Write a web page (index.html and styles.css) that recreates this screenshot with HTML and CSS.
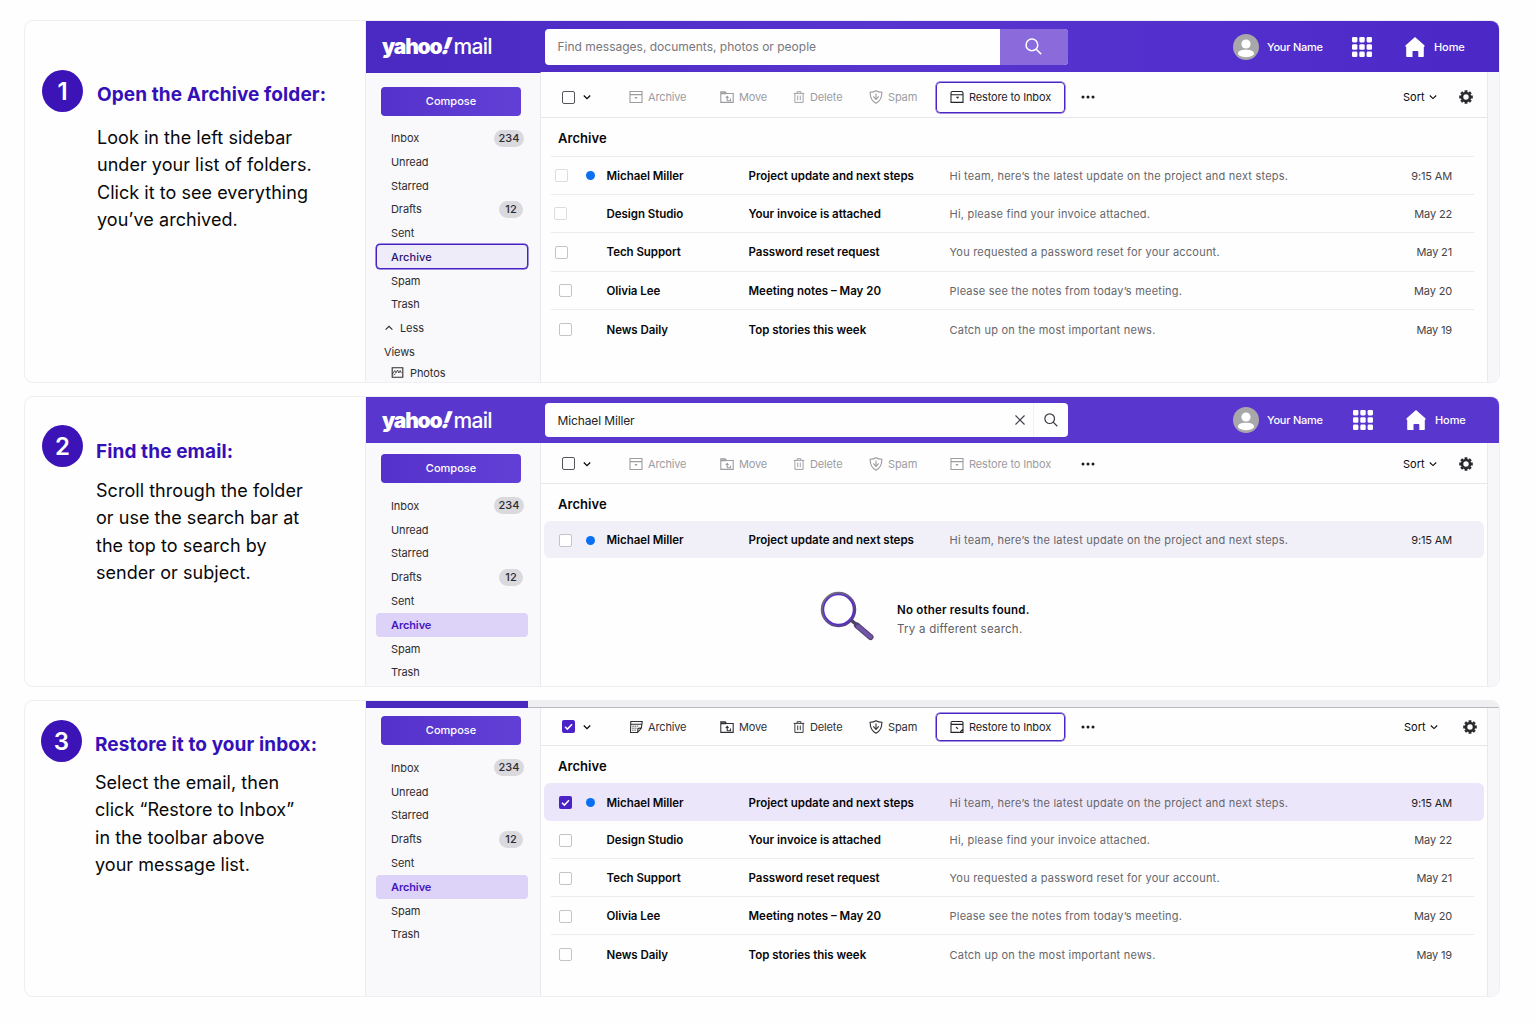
FILE: index.html
```html
<!DOCTYPE html>
<html lang="en">
<head>
    <meta charset="UTF-8">
    <meta name="viewport" content="width=device-width, initial-scale=1.0">
    <title>Restore archived email</title>
    <link rel="stylesheet" href="styles.css">
</head>
<body>
    <!-- Icon set -->
    <svg class="sprite" xmlns="http://www.w3.org/2000/svg">
        <symbol id="i-archive" viewBox="0 0 14 14"><path d="M1 1.500h12v11H1zM1 4.600h12" /><path d="M5.800 7.800h2.400" stroke-width="1.500" /></symbol>
        <symbol id="i-move" viewBox="0 0 14 14"><path d="M.8 12.400V1.800h4.400l1.200 1.700h6.800v8.900z" /><path d="M1 3.200h5.200" stroke-width="2" /><path d="M7.200 10.800V7M5.800 8L7.200 6.400 8.600 8M7.200 10.700h3.300V8.500" /></symbol>
        <symbol id="i-trash" viewBox="0 0 14 14"><path d="M.8 2.800h12.400M4.800 2.600V.8h4.400v1.800M2.200 2.800v10.500h9.600V2.800M5.500 5.300v5.400M8.500 5.300v5.400" /></symbol>
        <symbol id="i-shield" viewBox="0 0 14 14"><path d="M7 .8c1.900 1.200 3.700 1.500 5.900 1.500 0 5-1.200 8.600-5.900 11C2.300 10.900 1.100 7.300 1.100 2.300 3.300 2.300 5.100 2 7 .8z" /><path d="M7 3.600v5.900M4.300 6.300L7 9.500l2.700-3.200" /></symbol>
        <symbol id="i-restore" viewBox="0 0 14 14"><path d="M1 3c0-1 .6-1.500 1.500-1.500h9c.9 0 1.500.5 1.500 1.500v9.400H1zM1 4.700h12M6.200 7.200h2l-.8 1.200" /></symbol>
        <symbol id="i-restore-alt" viewBox="0 0 14 14"><path d="M13 9V2.800c0-.8-.5-1.300-1.300-1.300H2.300C1.500 1.500 1 2 1 2.800v9.600h8M1 4.400h12M6 7.200l2 1.500M10 12.200l3-3v3.200z" /></symbol>
        <symbol id="i-archive-alt" viewBox="0 0 14 14"><path d="M1.500 12.500l.3-11h11.400l-.8 6.500-3.800 4.500zM1.600 4.300h11.200M8.600 12.300l.4-3.800 3.400-.6" /><path d="M3.300 6.200h6M3.200 8.200h5M3.200 10.200h4" stroke-dasharray="1.500 .7" stroke-width=".8" /></symbol>
        <symbol id="i-down" viewBox="0 0 8 8"><path d="M.8 2.500L4 5.600l3.200-3.100" /></symbol>
        <symbol id="i-up" viewBox="0 0 8 8"><path d="M.6 5.700L4 2.300l3.400 3.400" /></symbol>
        <symbol id="i-search" viewBox="0 0 16 16"><circle cx="6.500" cy="6.500" r="5.500" /><path d="M10.500 10.500l4.700 4.700" /></symbol>
        <symbol id="i-close" viewBox="0 0 10 10"><path d="M.5.5l9 9M9.500.5l-9 9" /></symbol>
        <symbol id="i-check" viewBox="0 0 13 13"><path d="M3 6.700l2.400 2.400L10 4.200" /></symbol>
        <symbol id="i-photo" viewBox="0 0 12 11"><path d="M.7.700h10.600v9.600H.7z" /><path d="M1 7l2.300-3.500L4.500 6l1.600-3 1.300 3 1.300-2.500L9.800 6M2 8l2-1.200" stroke-width=".8" /></symbol>
        <symbol id="i-avatar" viewBox="0 0 26 26"><circle cx="13" cy="13" r="13" fill="#a8a8aa" /><circle cx="13" cy="10" r="4.600" fill="#fff" /><path d="M4.900 20.200c0-3.400 3.200-4.500 8.100-4.500s8.100 1.100 8.100 4.500c-2.200 2.200-5 3-8.100 3s-5.900-.8-8.100-3z" fill="#fff" /></symbol>
        <symbol id="i-apps" viewBox="0 0 20 20"><g fill="#fff"><rect width="5.400" height="5.400" rx="1.300" /><rect x="7.300" width="5.400" height="5.400" rx="1.300" /><rect x="14.600" width="5.400" height="5.400" rx="1.300" /><rect y="7.300" width="5.400" height="5.400" rx="1.300" /><rect x="7.300" y="7.300" width="5.400" height="5.400" rx="1.300" /><rect x="14.600" y="7.300" width="5.400" height="5.400" rx="1.300" /><rect y="14.600" width="5.400" height="5.400" rx="1.300" /><rect x="7.300" y="14.600" width="5.400" height="5.400" rx="1.300" /><rect x="14.600" y="14.600" width="5.400" height="5.400" rx="1.300" /></g></symbol>
        <symbol id="i-home" viewBox="0 0 20 20"><path d="M10 0l9.300 8.300c.5.500.4 1.500-.5 1.700V19c0 .600-.4 1-1 1h-4.500v-5.200c0-.500-.3-.8-.8-.8H8.300c-.5 0-.8.3-.8.800V20H2.200c-.6 0-1-.4-1-1v-9C.3 9.800.2 8.800.7 8.300z" fill="#fff" /></symbol>
        <symbol id="i-gear" viewBox="0 0 14 14"><circle cx="7" cy="7" r="4" fill="none" stroke="#29292e" stroke-width="2.600" /><path d="M7 .2v2M7 11.800v2M.2 7h2M11.800 7h2M2.200 2.200l1.400 1.400M10.400 10.400l1.400 1.400M2.200 11.800l1.400-1.400M10.400 3.600l1.400-1.400" stroke="#29292e" stroke-width="2.800" /></symbol>
        <symbol id="i-dots" viewBox="0 0 14 4"><g fill="#1c1c20"><circle cx="2" cy="2" r="1.500" /><circle cx="7" cy="2" r="1.500" /><circle cx="12" cy="2" r="1.500" /></g></symbol>
        <linearGradient id="ring" x1="0" y1="0" x2="1" y2="1">
            <stop offset="0" stop-color="#77737f" />
            <stop offset="1" stop-color="#4d3590" />
        </linearGradient>
    </svg>

    <main class="guide">
        <!-- Step 1 -->
        <section class="panel panel-1">
            <div class="step">
                <div class="num">1</div>
                <div class="step-text">
                    <h2>Open the Archive folder:</h2>
                    <p>Look in the left sidebar<br>under your list of folders.<br>Click it to see everything<br>you’ve archived.</p>
                </div>
            </div>
            <div class="mail">
                <header class="topbar">
                    <div class="logo"><b>yahoo</b><i>!</i><span>mail</span></div>
                    <div class="search">
                        <span class="placeholder">Find messages, documents, photos or people</span>
                        <div class="search-btn"><svg class="ic s17"><use href="#i-search" /></svg></div>
                    </div>
                    <div class="user">
                        <svg class="avatar"><use href="#i-avatar" /></svg>
                        <span class="name">Your Name</span>
                        <svg class="apps"><use href="#i-apps" /></svg>
                        <svg class="home"><use href="#i-home" /></svg>
                        <span class="home-label">Home</span>
                    </div>
                </header>
                <div class="body">
                    <aside class="sidebar">
                        <div class="compose">Compose</div>
                        <ul class="folders">
                            <li>Inbox <span class="badge">234</span></li>
                            <li>Unread</li>
                            <li>Starred</li>
                            <li>Drafts <span class="badge small">12</span></li>
                            <li>Sent</li>
                            <li class="outlined">Archive</li>
                            <li>Spam</li>
                            <li>Trash</li>
                            <li class="less"><svg class="ic s8"><use href="#i-up" /></svg>Less</li>
                            <li class="views">Views</li>
                            <li class="photos"><svg class="ic photo"><use href="#i-photo" /></svg>Photos</li>
                        </ul>
                    </aside>
                    <div class="content">
                        <div class="toolbar off">
                            <span class="box dark"></span>
                            <svg class="ic s8 caret"><use href="#i-down" /></svg>
                            <span class="tool"><svg class="ic"><use href="#i-archive" /></svg>Archive</span>
                            <span class="tool"><svg class="ic"><use href="#i-move" /></svg>Move</span>
                            <span class="tool t-delete"><svg class="ic"><use href="#i-trash" /></svg>Delete</span>
                            <span class="tool"><svg class="ic"><use href="#i-shield" /></svg>Spam</span>
                            <span class="tool restore active"><svg class="ic"><use href="#i-restore" /></svg>Restore to Inbox</span>
                            <svg class="dots"><use href="#i-dots" /></svg>
                            <span class="sort">Sort <svg class="ic s8"><use href="#i-down" /></svg></span>
                            <svg class="gear"><use href="#i-gear" /></svg>
                        </div>
                        <h3>Archive</h3>
                        <div class="list ruled">
                            <div class="row"><span class="box light nudge-3"></span><span class="dot"></span><b>Michael Miller</b><b class="subject">Project update and next steps</b><span class="preview">Hi team, here’s the latest update on the project and next steps.</span><time>9:15 AM</time></div>
                            <div class="row"><span class="box light nudge-4"></span><span></span><b>Design Studio</b><b class="subject">Your invoice is attached</b><span class="preview">Hi, please find your invoice attached.</span><time>May 22</time></div>
                            <div class="row"><span class="box nudge-3"></span><span></span><b>Tech Support</b><b class="subject">Password reset request</b><span class="preview">You requested a password reset for your account.</span><time>May 21</time></div>
                            <div class="row"><span class="box"></span><span></span><b>Olivia Lee</b><b class="subject">Meeting notes – May 20</b><span class="preview">Please see the notes from today’s meeting.</span><time>May 20</time></div>
                            <div class="row"><span class="box"></span><span></span><b>News Daily</b><b class="subject">Top stories this week</b><span class="preview">Catch up on the most important news.</span><time>May 19</time></div>
                        </div>
                    </div>
                    <div class="gutter"></div>
                </div>
            </div>
        </section>

        <!-- Step 2 -->
        <section class="panel panel-2">
            <div class="step">
                <div class="num">2</div>
                <div class="step-text">
                    <h2>Find the email:</h2>
                    <p>Scroll through the folder<br>or use the search bar at<br>the top to search by<br>sender or subject.</p>
                </div>
            </div>
            <div class="mail">
                <header class="topbar">
                    <div class="logo"><b>yahoo</b><i>!</i><span>mail</span></div>
                    <div class="search">
                        <span class="query">Michael Miller</span>
                        <svg class="ic clear"><use href="#i-close" /></svg>
                        <div class="search-end"><svg class="ic s14"><use href="#i-search" /></svg></div>
                    </div>
                    <div class="user">
                        <svg class="avatar"><use href="#i-avatar" /></svg>
                        <span class="name">Your Name</span>
                        <svg class="apps"><use href="#i-apps" /></svg>
                        <svg class="home"><use href="#i-home" /></svg>
                        <span class="home-label">Home</span>
                    </div>
                </header>
                <div class="body">
                    <aside class="sidebar">
                        <div class="compose">Compose</div>
                        <ul class="folders">
                            <li>Inbox <span class="badge">234</span></li>
                            <li>Unread</li>
                            <li>Starred</li>
                            <li>Drafts <span class="badge small">12</span></li>
                            <li>Sent</li>
                            <li class="selected">Archive</li>
                            <li>Spam</li>
                            <li>Trash</li>
                        </ul>
                    </aside>
                    <div class="content">
                        <div class="toolbar off">
                            <span class="box dark"></span>
                            <svg class="ic s8 caret"><use href="#i-down" /></svg>
                            <span class="tool"><svg class="ic"><use href="#i-archive" /></svg>Archive</span>
                            <span class="tool"><svg class="ic"><use href="#i-move" /></svg>Move</span>
                            <span class="tool t-delete"><svg class="ic"><use href="#i-trash" /></svg>Delete</span>
                            <span class="tool"><svg class="ic"><use href="#i-shield" /></svg>Spam</span>
                            <span class="tool restore"><svg class="ic"><use href="#i-archive" /></svg>Restore to Inbox</span>
                            <svg class="dots"><use href="#i-dots" /></svg>
                            <span class="sort">Sort <svg class="ic s8"><use href="#i-down" /></svg></span>
                            <svg class="gear"><use href="#i-gear" /></svg>
                        </div>
                        <h3>Archive</h3>
                        <div class="list">
                            <div class="row hover"><span class="box"></span><span class="dot"></span><b>Michael Miller</b><b class="subject">Project update and next steps</b><span class="preview">Hi team, here’s the latest update on the project and next steps.</span><time>9:15 AM</time></div>
                        </div>
                        <div class="empty">
                            <svg class="lens" viewBox="0 0 54 50">
                                <path d="M31 29l7 6" stroke="#4b4459" stroke-width="3.500" />
                                <path d="M37 34.500l13.500 11.500" stroke="#4f4268" stroke-width="6" stroke-linecap="round" />
                                <path d="M38 35.500l12.500 10.500" stroke="#7455ae" stroke-width="4" stroke-linecap="round" />
                                <circle cx="18.500" cy="18.500" r="16.500" fill="#fff" stroke="url(#ring)" stroke-width="2.500" />
                                <circle cx="18.500" cy="18.500" r="15" fill="none" stroke="#5a2fc8" stroke-width="1.500" />
                            </svg>
                            <div class="empty-text">
                                <b>No other results found.</b>
                                <span>Try a different search.</span>
                            </div>
                        </div>
                    </div>
                    <div class="gutter"></div>
                </div>
            </div>
        </section>

        <!-- Step 3 -->
        <section class="panel panel-3">
            <div class="step">
                <div class="num">3</div>
                <div class="step-text">
                    <h2>Restore it to your inbox:</h2>
                    <p>Select the email, then<br>click “Restore to Inbox”<br>in the toolbar above<br>your message list.</p>
                </div>
            </div>
            <div class="mail">
                <div class="strip"><span></span></div>
                <div class="body">
                    <aside class="sidebar">
                        <div class="compose">Compose</div>
                        <ul class="folders">
                            <li>Inbox <span class="badge">234</span></li>
                            <li>Unread</li>
                            <li>Starred</li>
                            <li>Drafts <span class="badge small">12</span></li>
                            <li>Sent</li>
                            <li class="selected">Archive</li>
                            <li>Spam</li>
                            <li>Trash</li>
                        </ul>
                    </aside>
                    <div class="content">
                        <div class="toolbar">
                            <span class="box checked"><svg class="ic"><use href="#i-check" /></svg></span>
                            <svg class="ic s8 caret"><use href="#i-down" /></svg>
                            <span class="tool"><svg class="ic"><use href="#i-archive-alt" /></svg>Archive</span>
                            <span class="tool"><svg class="ic"><use href="#i-move" /></svg>Move</span>
                            <span class="tool t-delete"><svg class="ic"><use href="#i-trash" /></svg>Delete</span>
                            <span class="tool"><svg class="ic"><use href="#i-shield" /></svg>Spam</span>
                            <span class="tool restore active"><svg class="ic"><use href="#i-restore-alt" /></svg>Restore to Inbox</span>
                            <svg class="dots"><use href="#i-dots" /></svg>
                            <span class="sort">Sort <svg class="ic s8"><use href="#i-down" /></svg></span>
                            <svg class="gear"><use href="#i-gear" /></svg>
                        </div>
                        <h3>Archive</h3>
                        <div class="list">
                            <div class="row picked"><span class="box checked"><svg class="ic"><use href="#i-check" /></svg></span><span class="dot"></span><b>Michael Miller</b><b class="subject">Project update and next steps</b><span class="preview">Hi team, here’s the latest update on the project and next steps.</span><time>9:15 AM</time></div>
                            <div class="row"><span class="box"></span><span></span><b>Design Studio</b><b class="subject">Your invoice is attached</b><span class="preview">Hi, please find your invoice attached.</span><time>May 22</time></div>
                            <div class="row"><span class="box"></span><span></span><b>Tech Support</b><b class="subject">Password reset request</b><span class="preview">You requested a password reset for your account.</span><time>May 21</time></div>
                            <div class="row"><span class="box"></span><span></span><b>Olivia Lee</b><b class="subject">Meeting notes – May 20</b><span class="preview">Please see the notes from today’s meeting.</span><time>May 20</time></div>
                            <div class="row"><span class="box"></span><span></span><b>News Daily</b><b class="subject">Top stories this week</b><span class="preview">Catch up on the most important news.</span><time>May 19</time></div>
                        </div>
                    </div>
                    <div class="gutter"></div>
                </div>
            </div>
        </section>
    </main>
</body>
</html>
```

FILE: styles.css
```css
* {
    box-sizing: border-box;
}

body {
    margin: 0;
    background: #fefefe;
    color: #08080a;
    font-family: Inter, "Liberation Sans", sans-serif;
    font-size: 11px;
}

h2, h3, p, ul {
    margin: 0;
    padding: 0;
}

.sprite {
    display: block;
    width: 0;
    height: 0;
}

.ic {
    display: block;
    flex: none;
    width: 14px;
    height: 14px;
    fill: none;
    stroke: currentColor;
    stroke-width: 1.1;
}

.s8 {
    width: 8px;
    height: 8px;
}

.s14 {
    width: 14px;
    height: 14px;
    stroke-width: 1.4;
}

.s17 {
    width: 17px;
    height: 17px;
    stroke-width: 1.4;
}

/* Panels */
.guide {
    height: 1024px;
    padding: 20px 36px 0 24px;
    overflow: hidden;
}

.panel {
    display: flex;
    border: 1px solid #eeeef3;
    border-radius: 9px;
    overflow: hidden;
    background: #fefefe;
}

.panel-1 {
    height: 363px;
    margin-bottom: 13px;
}

.panel-2 {
    height: 291px;
    margin-bottom: 13px;
}

.panel-3 {
    height: 297px;
}

/* Step instructions */
.step {
    flex: none;
    display: flex;
    align-items: flex-start;
    gap: 14px;
    width: 340px;
    padding: 49px 0 0 17px;
}

.panel-2 .step {
    gap: 13px;
    padding-top: 28px;
}

.panel-3 .step {
    gap: 13px;
    padding: 19px 0 0 16px;
}

.num {
    display: flex;
    align-items: center;
    justify-content: center;
    width: 41px;
    height: 42px;
    border-radius: 50%;
    background: #3b13b7;
    color: #fff;
    font-size: 24px;
    font-weight: 600;
}

.step-text {
    padding-top: 12px;
}

.panel-2 .step-text {
    padding-top: 14px;
}

h2 {
    margin-bottom: 16px;
    color: #3510b8;
    font-size: 19px;
    font-weight: 700;
    line-height: 26px;
    letter-spacing: 0.1px;
    white-space: nowrap;
}

.panel-2 h2 {
    margin-bottom: 12px;
}

.panel-3 h2 {
    margin-bottom: 11px;
}

.step p {
    font-size: 18px;
    line-height: 27.4px;
    letter-spacing: 0.04px;
    white-space: nowrap;
}

/* Mail window */
.mail {
    flex: 1;
    display: flex;
    flex-direction: column;
    min-width: 0;
    border-left: 1px solid #ececf2;
}

.topbar {
    flex: none;
    display: flex;
    align-items: center;
    height: 51px;
    background: linear-gradient(90deg, #4a28c2, #5734ce 45%, #5330cd 75%, #4b28c6);
    color: #fff;
}

.panel-2 .topbar {
    height: 46px;
    background: #5936cd;
}

.logo {
    display: flex;
    align-items: baseline;
    width: 178.5px;
    padding-left: 16px;
    font-size: 21px;
    line-height: 24px;
}

.logo b {
    font-weight: 900;
    letter-spacing: -1.2px;
}

.logo i {
    width: 12px;
    font-size: 23px;
    font-style: normal;
    font-weight: 900;
    text-align: center;
    transform: skewX(-20deg);
}

.logo span {
    font-weight: 500;
    letter-spacing: -0.7px;
}

.search {
    display: flex;
    align-items: center;
    width: 523px;
    height: 36px;
    border-radius: 4px;
    overflow: hidden;
    background: #fefefe;
    font-size: 12px;
}

.panel-2 .search {
    height: 34px;
}

.placeholder {
    flex: 1;
    padding-left: 13px;
    color: #77777c;
}

.search-btn {
    display: flex;
    align-items: center;
    justify-content: center;
    width: 68px;
    height: 36px;
    background: #8b6bdc;
}

.query {
    flex: 1;
    padding-left: 13px;
    color: #232327;
    letter-spacing: -0.13px;
}

.clear {
    width: 10px;
    height: 10px;
    margin-right: 8px;
    color: #3c3c42;
}

.search-end {
    display: flex;
    align-items: center;
    width: 35px;
    height: 34px;
    padding-left: 10px;
    border-left: 1px solid #f1f1f4;
    color: #3c3c42;
}

.user {
    display: flex;
    align-items: center;
    margin-left: 165.5px;
    font-size: 11px;
    font-weight: 500;
    letter-spacing: -0.25px;
}

.avatar {
    width: 26px;
    height: 26px;
}

.name {
    width: 93px;
    padding-left: 8px;
}

.apps {
    width: 20px;
    height: 20px;
}

.home {
    width: 20px;
    height: 20px;
    margin: 0 9px 0 33px;
}

.home-label {
    letter-spacing: -0.1px;
}

.panel-2 .name {
    width: 94px;
}

.body {
    flex: 1;
    display: flex;
    min-height: 0;
}

/* Sidebar */
.sidebar {
    flex: none;
    width: 175px;
    padding: 15px 12px 0 10px;
    border-right: 1px solid #e8e8ee;
    background: #f9f9fb;
}

.panel-1 .sidebar {
    border-top: 1px solid #4a28c2;
    padding-top: 14px;
}

.panel-2 .sidebar {
    padding-top: 11px;
}

.panel-3 .sidebar {
    padding-top: 8px;
}

.compose {
    width: 140px;
    height: 29px;
    margin: 0 0 11px 5px;
    border-radius: 4px;
    background: linear-gradient(90deg, #5531cb, #6240d6);
    color: #fff;
    font-weight: 500;
    line-height: 29px;
    text-align: center;
}

.panel-1 .compose {
    margin-bottom: 10.5px;
}

.folders {
    list-style: none;
}

.folders li {
    display: flex;
    align-items: center;
    height: 23.8px;
    padding: 0 4px 0 15px;
    color: #2c2c31;
    white-space: nowrap;
    letter-spacing: -0.1px;
}

.panel-1 .folders li {
    height: 23.7px;
}

.badge {
    width: 30px;
    height: 17px;
    margin-left: auto;
    border-radius: 9px;
    background: #d9d9de;
    font-weight: 500;
    letter-spacing: 0.1px;
    line-height: 17px;
    text-align: center;
}

.badge.small {
    width: 24px;
    margin-right: 1px;
}

.panel-1 .folders .outlined {
    height: 25px;
    margin: -0.6px 0;
    padding-left: 14px;
    border: 1px solid #4520c4;
    border-radius: 4px;
    background: #efecfa;
    box-shadow: 0 0 0 0.5px #4520c4;
    color: #28136b;
    font-weight: 500;
    letter-spacing: 0.1px;
}

.folders .selected {
    border-radius: 4px;
    background: #ddd2f8;
    color: #4318bf;
    font-weight: 600;
}

.folders .less {
    gap: 7px;
    padding-left: 9px;
}

.folders .views {
    padding-left: 8px;
}

.panel-1 .folders .photos {
    gap: 6px;
    height: 18px;
}

.photo {
    width: 13px;
    height: 11px;
}

/* Toolbar */
.content {
    flex: 1;
    min-width: 0;
}

.toolbar {
    display: grid;
    grid-template-columns: 21px 46px 91px 73px 76px 67px 129px 1fr 56px 14px;
    align-items: center;
    height: 46px;
    padding: 5px 14px 0 21px;
    border-bottom: 1px solid #e6e6ec;
}

.panel-2 .toolbar {
    height: 41px;
    padding-top: 1px;
}

.panel-3 .toolbar {
    grid-template-columns: 21px 46px 91px 73px 76px 67px 129px 1fr 59px 14px;
    height: 38px;
    padding: 0 10px 0 21px;
}

.caret {
    stroke-width: 1.3;
}

.box {
    width: 13px;
    height: 13px;
    border: 1px solid #c3c3c9;
    border-radius: 2px;
    background: #fff;
}

.box.light {
    border-color: #dcdce1;
}

.box.dark {
    border-color: #55555b;
}

.box.checked {
    border: 0;
    background: #4a22c6;
    color: #fff;
}

.box.checked .ic {
    width: 13px;
    height: 13px;
    stroke-width: 1.5;
}

.nudge-3 {
    margin-left: -4px;
}

.nudge-4 {
    margin-left: -5px;
}

.tool {
    display: flex;
    align-items: center;
    gap: 5px;
    color: #303035;
    letter-spacing: -0.15px;
    white-space: nowrap;
}

.t-delete .ic {
    width: 12px;
}

.off .tool {
    color: #9c9ca1;
}

.tool.restore {
    height: 31px;
    padding-left: 14px;
}

.toolbar .tool.active {
    padding-left: 13px;
    border: 1px solid #4a25c4;
    border-radius: 4px;
    box-shadow: 0 0 0 0.5px #4a25c4;
    color: #232328;
}

.panel-3 .tool.restore {
    height: 28px;
}

.dots {
    width: 14px;
    height: 4px;
    margin-left: 16px;
}

.sort {
    display: flex;
    align-items: center;
    gap: 4px;
}

.gear {
    width: 14px;
    height: 14px;
}

/* Message list */
h3 {
    height: 37px;
    padding: 3px 0 0 17px;
    font-size: 13px;
    font-weight: 600;
    line-height: 34px;
    letter-spacing: 0.05px;
}

.row {
    display: grid;
    grid-template-columns: 27px 20.5px 142px 201px 1fr auto;
    align-items: center;
    height: 38.5px;
    margin: 0 13px 0 10px;
    padding: 1px 22px 0 8px;
    border-bottom: 1px solid #ececf0;
    white-space: nowrap;
}

.panel-3 .row {
    height: 38px;
}

.row:last-child {
    border-bottom: 0;
}

.ruled {
    padding-top: 0.5px;
}

.ruled .row:first-child {
    height: 39px;
    border-top: 1px solid #ececf0;
}

.row b {
    font-size: 11.5px;
    font-weight: 600;
    letter-spacing: -0.05px;
}

.row .subject {
    letter-spacing: 0;
}

.row .preview {
    color: #66666b;
    letter-spacing: 0.22px;
}

.row time {
    color: #45454a;
    letter-spacing: -0.15px;
}

.dot {
    width: 9px;
    height: 9px;
    border-radius: 50%;
    background: #0a6ff0;
}

.row.hover, .row.picked {
    height: 37px;
    margin: 0 3px;
    padding: 1px 32px 0 15px;
    border: 0;
    border-radius: 6px;
    background: #f1f0f8;
}

.row.picked {
    height: 38px;
    background: #ece6fa;
}

.hover time, .picked time {
    color: #1c1c20;
}

.gutter {
    flex: none;
    width: 12px;
    border-left: 1px solid #e9e9ef;
    background: #f7f7f9;
}

/* No results */
.empty {
    display: flex;
    align-items: center;
    gap: 23px;
    margin: 33px 0 0 279px;
    font-size: 11.5px;
    line-height: 19px;
}

.empty-text {
    padding-top: 8px;
}

.empty b, .empty span {
    display: block;
}

.empty b {
    font-weight: 600;
    letter-spacing: 0.2px;
}

.empty span {
    color: #606065;
    letter-spacing: 0.25px;
}

.lens {
    flex: none;
    width: 54px;
    height: 50px;
}

/* Cropped header in step 3 */
.strip {
    flex: none;
    height: 7px;
    border-bottom: 1px solid #b9b9c0;
    background: #efeff1;
}

.strip span {
    display: block;
    width: 162px;
    height: 7px;
    background: #4a28c0;
}
```
